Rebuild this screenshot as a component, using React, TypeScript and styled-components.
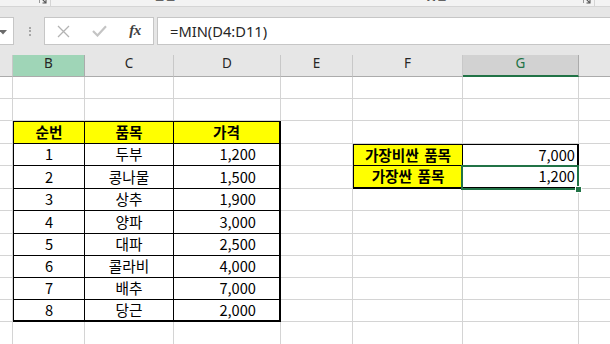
import React from "react";
import styled, { createGlobalStyle } from "styled-components";

const GlobalStyle = createGlobalStyle`
  html, body { margin: 0; padding: 0; background: #ffffff; overflow: hidden; }
  *, *::before, *::after { box-sizing: border-box; }
`;

const COLS = "13px 72px 89px 107px 72px 110px 116px 72px";
const ROWS = "22px 22px 23px 22px 23px 22px 23px 22px 22px 22px 22px 23px";

const Window = styled.div`
  width: 610px;
  height: 344px;
  overflow: hidden;
  display: flex;
  flex-direction: column;
  background: #ffffff;
  font-family: "Noto Sans", "Noto Sans CJK KR", sans-serif;
`;

/* ---------- ribbon (bottom sliver) ---------- */
const RibbonFoot = styled.div`
  flex: none;
  height: 7px;
  display: flex;
  background: #f3f3f3;
  border-bottom: 1px solid #d5d5d5;
  overflow: hidden;
`;

const RibbonGroup = styled.div<{ $w?: number; $sep?: boolean }>`
  flex: ${(p) => (p.$w ? `0 0 ${p.$w}px` : "1 1 auto")};
  display: grid;
  grid-template-columns: 1fr;
  align-items: start;
  border-right: ${(p) => (p.$sep ? "1px solid #d5d5d5" : "none")};
  & > * {
    grid-area: 1 / 1;
  }
`;

const GroupLabel = styled.span`
  justify-self: center;
  font: 12px/16px "Noto Sans CJK KR", sans-serif;
  color: #444444;
  margin-top: -13px;
  white-space: nowrap;
`;

const LauncherIcon = styled.svg`
  justify-self: end;
  margin: -4px 3px 0 0;
  display: block;
`;

const Launcher = () => (
  <LauncherIcon width="8" height="8" viewBox="0 0 8 8">
    <path d="M0.5 7 V0.5 H7" fill="none" stroke="#9a9a9a" strokeWidth="1" />
    <path d="M2.5 2.5 L6.8 6.8 M7 3.5 V7 H3.5" fill="none" stroke="#555555" strokeWidth="1.1" />
  </LauncherIcon>
);

/* ---------- formula bar ---------- */
const FormulaArea = styled.div`
  flex: none;
  height: 48px;
  padding: 10px 0;
  background: #e6e6e6;
  display: flex;
  align-items: stretch;
`;

const NameBox = styled.div`
  flex: 0 0 14px;
  background: #ffffff;
  border: 1px solid #c6c6c6;
  border-left: none;
  display: flex;
  align-items: center;
  justify-content: flex-start;
`;

const Caret = styled.svg`
  display: block;
  margin: 2px 0 0 -1px;
`;

const DotsHandle = styled.div`
  flex: 0 0 30px;
  display: flex;
  flex-direction: column;
  align-items: center;
  justify-content: center;
  gap: 1.5px;
  padding-left: 1px;
`;

const Dot = styled.span`
  width: 2px;
  height: 2px;
  background: #a6a6a6;
`;

const FxBox = styled.div`
  flex: 0 0 110px;
  background: #ffffff;
  border: 1px solid #c6c6c6;
  display: grid;
  grid-template-columns: repeat(3, 36px);
  align-items: center;
  justify-items: center;
`;

const FxLabel = styled.span`
  font: italic 700 15px/1 "Liberation Serif", serif;
  color: #3f3f3f;
  letter-spacing: -0.5px;
  margin-top: -1px;
`;

const FormulaInput = styled.div`
  flex: 1 1 auto;
  margin-left: 3px;
  background: #ffffff;
  border: 1px solid #c6c6c6;
  border-right: none;
  padding-left: 12px;
  display: flex;
  align-items: center;
  font: 14.67px/1 "Noto Sans", sans-serif;
  color: #262626;
  white-space: nowrap;
`;

/* ---------- column headers ---------- */
const HeaderRow = styled.div`
  flex: none;
  display: grid;
  grid-template-columns: ${COLS};
  height: 22px;
  background: #e6e6e6;
`;

type HeadState = "normal" | "highlight" | "active";

const ColHeader = styled.div<{ $state: HeadState }>`
  display: flex;
  align-items: center;
  justify-content: center;
  padding-bottom: ${(p) => (p.$state === "active" ? "2px" : "3px")};
  font: 13.5px/1 "Noto Sans", sans-serif;
  color: ${(p) => (p.$state === "active" ? "#217346" : "#262626")};
  background: ${(p) =>
    p.$state === "highlight" ? "#9fd5b7" : p.$state === "active" ? "#d2d2d2" : "#e6e6e6"};
  border-right: 1px solid ${(p) => (p.$state === "normal" ? "#c8c8c8" : "#ababab")};
  border-bottom: ${(p) => (p.$state === "active" ? "2px solid #217346" : "1px solid #ababab")};
`;

/* ---------- sheet ---------- */
const Sheet = styled.div`
  flex: none;
  display: grid;
  grid-template-columns: ${COLS};
  grid-template-rows: ${ROWS};
  background: #ffffff;
`;

const GridCell = styled.div`
  border-right: 1px solid #d4d4d4;
  border-bottom: 1px solid #d4d4d4;
`;

const RangeBox = styled.div<{ $area: string; $cols: string; $rows: string }>`
  grid-area: ${(p) => p.$area};
  margin: -1px 0 0 -1px;
  border: 2px solid #000000;
  display: grid;
  grid-template-columns: ${(p) => p.$cols};
  grid-template-rows: ${(p) => p.$rows};
  background: #ffffff;
`;

type Align = "left" | "center" | "right";

const DataCell = styled.div<{
  $align: Align;
  $head?: boolean;
  $lastCol?: boolean;
  $lastRow?: boolean;
  $pr?: number;
}>`
  position: relative;
  display: flex;
  align-items: center;
  justify-content: ${(p) =>
    p.$align === "center" ? "center" : p.$align === "right" ? "flex-end" : "flex-start"};
  padding-right: ${(p) => p.$pr ?? 0}px;
  border-right: ${(p) => (p.$lastCol ? "none" : "1px solid #000000")};
  border-bottom: ${(p) => (p.$lastRow ? "none" : "1px solid #000000")};
  background: ${(p) => (p.$head ? "#ffff00" : "#ffffff")};
  font-family: "Noto Sans CJK KR", sans-serif;
  font-size: 14.67px;
  font-weight: ${(p) => (p.$head ? 700 : 400)};
  line-height: 1;
  word-spacing: 2px;
  color: #000000;
  white-space: nowrap;
`;

const Selection = styled.div`
  position: absolute;
  top: -1px;
  left: -2px;
  right: -2px;
  bottom: -3px;
  border: 2px solid #217346;
  pointer-events: none;
`;

const FillHandle = styled.div`
  position: absolute;
  right: -5px;
  bottom: -5px;
  width: 7px;
  height: 7px;
  background: #217346;
  border: 1px solid #ffffff;
`;

const items: [number, string, string][] = [
  [1, "두부", "1,200"],
  [2, "콩나물", "1,500"],
  [3, "상추", "1,900"],
  [4, "양파", "3,000"],
  [5, "대파", "2,500"],
  [6, "콜라비", "4,000"],
  [7, "배추", "7,000"],
  [8, "당근", "2,000"],
];

const headers: [string, HeadState][] = [
  ["", "normal"],
  ["B", "highlight"],
  ["C", "normal"],
  ["D", "normal"],
  ["E", "normal"],
  ["F", "normal"],
  ["G", "active"],
  ["", "normal"],
];

const EMPTY_CELLS = 12 * 8 - 27 - 4;

export default function App() {
  return (
    <>
      <GlobalStyle />
      <Window>
        <RibbonFoot>
          <RibbonGroup $w={51} $sep>
            <Launcher />
          </RibbonGroup>
          <RibbonGroup $w={228}>
            <GroupLabel>글꼴</GroupLabel>
          </RibbonGroup>
          <RibbonGroup $w={316} $sep>
            <GroupLabel>맞춤</GroupLabel>
            <Launcher />
          </RibbonGroup>
          <RibbonGroup />
        </RibbonFoot>

        <FormulaArea>
          <NameBox>
            <Caret width="8" height="5" viewBox="0 0 8 5">
              <path d="M0 0 H8 L4 4.5 Z" fill="#6a6a6a" />
            </Caret>
          </NameBox>
          <DotsHandle>
            <Dot />
            <Dot />
            <Dot />
          </DotsHandle>
          <FxBox>
            <svg width="13" height="13" viewBox="0 0 13 13">
              <path d="M1 1 L12 12 M12 1 L1 12" stroke="#b3b3b3" strokeWidth="1.3" fill="none" />
            </svg>
            <svg width="15" height="12" viewBox="0 0 15 12">
              <path d="M1 6 L5.5 10.5 L14 1.2" stroke="#c4c4c4" strokeWidth="2.2" fill="none" />
            </svg>
            <FxLabel>fx</FxLabel>
          </FxBox>
          <FormulaInput>=MIN(D4:D11)</FormulaInput>
        </FormulaArea>

        <HeaderRow>
          {headers.map(([label, state], i) => (
            <ColHeader key={i} $state={state}>
              {label}
            </ColHeader>
          ))}
        </HeaderRow>

        <Sheet>
          <RangeBox
            $area="3 / 2 / 12 / 5"
            $cols="71px 89px 1fr"
            $rows="22px 22px 23px 22px 23px 22px 22px 22px 1fr"
          >
            <DataCell $align="center" $head>순번</DataCell>
            <DataCell $align="center" $head>품목</DataCell>
            <DataCell $align="center" $head $lastCol>가격</DataCell>
            {items.map(([n, name, price], i) => {
              const last = i === items.length - 1;
              return (
                <React.Fragment key={n}>
                  <DataCell $align="center" $lastRow={last}>{n}</DataCell>
                  <DataCell $align="center" $lastRow={last}>{name}</DataCell>
                  <DataCell $align="right" $pr={23} $lastCol $lastRow={last}>{price}</DataCell>
                </React.Fragment>
              );
            })}
          </RangeBox>

          <RangeBox $area="4 / 6 / 6 / 8" $cols="109px 1fr" $rows="21px 1fr">
            <DataCell $align="center" $head>가장비싼 품목</DataCell>
            <DataCell $align="right" $pr={2} $lastCol>7,000</DataCell>
            <DataCell $align="center" $head $lastRow>가장싼 품목</DataCell>
            <DataCell $align="right" $pr={2} $lastCol $lastRow>
              1,200
              <Selection>
                <FillHandle />
              </Selection>
            </DataCell>
          </RangeBox>

          {Array.from({ length: EMPTY_CELLS }, (_, i) => (
            <GridCell key={i} />
          ))}
        </Sheet>
      </Window>
    </>
  );
}
